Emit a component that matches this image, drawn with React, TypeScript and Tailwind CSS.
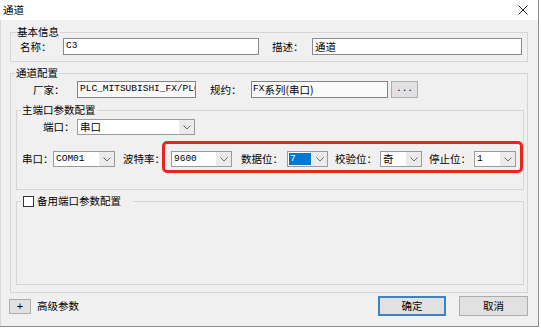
import React from "react";

const mono = "font-['Liberation_Mono','Noto_Sans_CJK_SC',monospace] text-[9.5px]";

function Chevron() {
  return (
    <svg width="8" height="5" viewBox="0 0 8 5" className="block">
      <path d="M0.5 0.5 L4 4 L7.5 0.5" fill="none" stroke="#6b6b6b" strokeWidth="1" />
    </svg>
  );
}

function Combo({ w, value, selected, cjk }: { w: string; value: string; selected?: boolean; cjk?: boolean }) {
  return (
    <div className={`${w} h-[16px] flex border border-[#9a9a9a] bg-white shrink-0`}>
      <div className="flex-1 min-w-0 flex items-center pl-[1px] pr-[1px] py-[1px]">
        {selected ? (
          <div className="h-full w-full bg-[#0078d7] text-white flex items-center pl-[1px]">
            <span className={`${mono} leading-[12px]`}>{value}</span>
          </div>
        ) : (
          <span className={`${cjk ? "text-[10.5px]" : mono} leading-[12px] pl-[1px] whitespace-nowrap`}>{value}</span>
        )}
      </div>
      <div className="w-[15px] bg-[#ebebeb] flex items-center justify-center">
        <Chevron />
      </div>
    </div>
  );
}

function Label({ w, text, ml }: { w: string; text: string; ml?: string }) {
  return <span className={`${w} ${ml ?? ""} shrink-0 whitespace-nowrap leading-[12px]`}>{text}</span>;
}

export default function App() {
  return (
    <div className="w-[541px] h-[330px] bg-white relative overflow-hidden font-['Noto_Sans_CJK_SC','Noto_Sans',sans-serif] text-[10.5px] text-black">
      <div className="w-[539px] h-[327px] border-r border-b border-[#8c8c8c] flex flex-col">
        {/* Title bar */}
        <div className="h-[20px] bg-white flex items-center justify-between pl-[3px] pr-[10px] shrink-0">
          <span className="text-[10.5px] leading-[12px]">通道</span>
          <svg width="10" height="10" viewBox="0 0 10 10" className="block">
            <path d="M0.5 0.5 L9.5 9.5 M9.5 0.5 L0.5 9.5" stroke="#222" strokeWidth="1" />
          </svg>
        </div>
        {/* Body */}
        <div className="flex-1 bg-[#f0f0f0] border-l border-[#dadada] flex flex-col pt-[6px]">
          {/* 基本信息 */}
          <fieldset className="ml-[9px] w-[518px] border border-[#d5d5d5] pb-[6px]">
            <legend className="ml-[5px] px-[1px] leading-[12px]">基本信息</legend>
            <div className="flex items-center h-[17px] pl-[9px]">
              <Label w="w-[43px]" text="名称：" />
              <div className={`w-[196px] h-[17px] border border-[#8a8a8a] bg-white flex items-center pl-[2px] ${mono}`}>C3</div>
              <Label w="w-[40px]" ml="ml-[13px]" text="描述：" />
              <div className="w-[210px] h-[17px] border border-[#8a8a8a] bg-white flex items-center pl-[2px] leading-[12px]">通道</div>
            </div>
          </fieldset>

          {/* 通道配置 */}
          <fieldset className="mt-[5px] ml-[9px] w-[518px] border border-[#d5d5d5] pb-[7px]">
            <legend className="ml-[4px] px-[1px] leading-[12px]">通道配置</legend>
            <div className="flex items-center h-[17px] mt-[2px] pl-[22px]">
              <Label w="w-[44px]" text="厂家：" />
              <div className={`w-[119px] h-[17px] border border-[#838383] bg-[#fafafa] flex items-center pl-[2px] overflow-hidden whitespace-nowrap ${mono}`}>
                PLC_MITSUBISHI_FX/PLC
              </div>
              <Label w="w-[41px]" ml="ml-[14px]" text="规约：" />
              <div className={`w-[137px] h-[17px] border border-[#838383] bg-[#fafafa] flex items-center pl-[1px] overflow-hidden whitespace-nowrap ${mono}`}>
                FX<span className="text-[10.5px] font-['Noto_Sans_CJK_SC',sans-serif] leading-[12px]">系列(串口)</span>
              </div>
              <div className={`ml-[3px] w-[27px] h-[17px] border border-[#adadad] bg-[#e1e1e1] flex items-center justify-center ${mono}`}>...</div>
            </div>

            {/* 主端口参数配置 */}
            <fieldset className="mt-[6px] ml-[5px] w-[508px] border border-[#d5d5d5] pb-[22px]">
              <legend className="ml-[4px] px-[1px] leading-[12px]">主端口参数配置</legend>
              <div className="flex items-center h-[16px] mt-[3px] pl-[26px]">
                <Label w="w-[34px]" text="端口：" />
                <Combo w="w-[118px]" value="串口" cjk />
              </div>
              <div className="flex items-center h-[16px] mt-[16px] pl-[5px]">
                <Label w="w-[31px]" text="串口：" />
                <Combo w="w-[62px]" value="COM01" />
                <Label w="w-[48px]" ml="ml-[8px]" text="波特率：" />
                <Combo w="w-[61px]" value="9600" />
                <Label w="w-[46px]" ml="ml-[9px]" text="数据位：" />
                <Combo w="w-[41px]" value="7" selected />
                <Label w="w-[45px]" ml="ml-[7px]" text="校验位：" />
                <Combo w="w-[42px]" value="奇" cjk />
                <Label w="w-[45px]" ml="ml-[7px]" text="停止位：" />
                <Combo w="w-[42px]" value="1" />
              </div>
            </fieldset>

            {/* 备用端口参数配置 */}
            <fieldset className="mt-[5px] ml-[5px] w-[508px] border border-[#d5d5d5]">
              <legend className="ml-[4px] pl-[2px] pr-[12px] leading-[12px] flex items-center">
                <span className="w-[11px] h-[11px] border border-[#333] bg-white inline-block shrink-0" />
                <span className="ml-[3px]">备用端口参数配置</span>
              </legend>
              <div className="h-[77px]" />
            </fieldset>
          </fieldset>

          {/* Bottom bar */}
          <div className="mt-[3px] h-[20px] flex items-center">
            <div className="ml-[8px] w-[22px] h-[15px] border border-[#adadad] bg-[#e1e1e1] flex items-center justify-center text-[11px] leading-[12px] font-['Liberation_Sans',sans-serif]">+</div>
            <span className="ml-[6px] leading-[12px]">高级参数</span>
            <div className="ml-auto w-[68px] h-[20px] border-2 border-[#3d82c4] bg-[#e1e1e1] flex items-center justify-center leading-[12px]">确定</div>
            <div className="ml-[13px] mr-[10px] w-[69px] h-[20px] border border-[#adadad] bg-[#e1e1e1] flex items-center justify-center leading-[12px]">取消</div>
          </div>
        </div>
      </div>

      {/* Red annotation */}
      <div className="absolute left-[162px] top-[141px] w-[361px] h-[32px] border-[3px] border-[#e8261f] rounded-[5px] pointer-events-none" />
    </div>
  );
}
